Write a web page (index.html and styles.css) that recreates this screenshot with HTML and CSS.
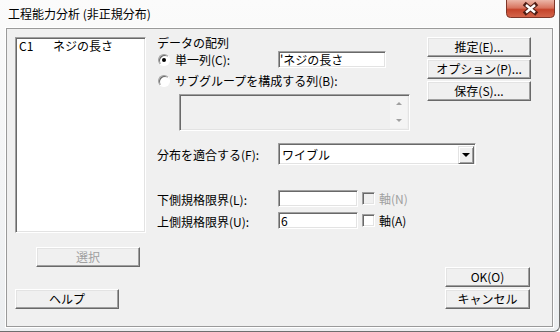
FILE: index.html
```html
<!DOCTYPE html>
<html lang="ja">

<head>
  <meta charset="UTF-8">
  <title>工程能力分析 (非正規分布)</title>
  <link rel="stylesheet" href="styles.css">
</head>

<body>
  <div class="window">
    <div class="titlebar">
      <span class="caption">工程能力分析 (非正規分布)</span>
      <span class="close">
        <svg width="49" height="18" viewBox="0 0 49 18">
          <defs>
            <linearGradient id="closeGrad" x1="0" y1="0" x2="0" y2="1">
              <stop offset="0" stop-color="#ecb6a8" />
              <stop offset="0.45" stop-color="#d8745f" />
              <stop offset="0.55" stop-color="#c5442b" />
              <stop offset="1" stop-color="#d4664c" />
            </linearGradient>
          </defs>
          <path d="M0.5 0 V13.5 Q0.5 17.5 4.5 17.5 H44.5 Q48.5 17.5 48.5 13.5 V0" fill="url(#closeGrad)" stroke="#7d3629" />
          <path d="M20 5 L29 12.5 M29 5 L20 12.5" stroke="#4f1d15" stroke-width="4.6" stroke-linecap="square" />
          <path d="M20 5 L29 12.5 M29 5 L20 12.5" stroke="#fff" stroke-width="2.4" />
        </svg>
      </span>
    </div>

    <div class="client">
      <div class="top">
        <!-- 列リスト -->
        <div class="left">
          <div class="listbox">
            <div class="item"><span class="colname">C1</span><span>ネジの長さ</span></div>
          </div>
          <button class="btn select" disabled>選択</button>
        </div>

        <!-- 入力欄 -->
        <div class="form">
          <div class="group-label">データの配列</div>
          <div class="radio-row">
            <div class="opt"><span class="radio checked"></span><span>単一列(C):</span></div>
            <div class="edit single">'ネジの長さ</div>
          </div>
          <div class="radio-row sub">
            <div class="opt"><span class="radio"></span><span>サブグループを構成する列(B):</span></div>
          </div>
          <div class="sublist">
            <div class="scroll">
              <span class="arrow up"></span>
              <span class="arrow down"></span>
            </div>
          </div>
          <div class="fit-row">
            <span class="lbl">分布を適合する(F):</span>
            <div class="combo">
              <span class="combo-text">ワイブル</span>
              <span class="drop"><span class="tri"></span></span>
            </div>
          </div>
          <div class="limit-row">
            <span class="lbl">下側規格限界(L):</span>
            <div class="edit limit"></div>
            <span class="check disabled"></span>
            <span class="check-text disabled">軸(N)</span>
          </div>
          <div class="limit-row">
            <span class="lbl">上側規格限界(U):</span>
            <div class="edit limit">6</div>
            <span class="check"></span>
            <span class="check-text">軸(A)</span>
          </div>
        </div>

        <!-- 右側ボタン -->
        <div class="side">
          <button class="btn">推定(E)...</button>
          <button class="btn">オプション(P)...</button>
          <button class="btn">保存(S)...</button>
        </div>
      </div>

      <div class="footer">
        <button class="btn help">ヘルプ</button>
        <div class="footer-right">
          <button class="btn ok">OK(O)</button>
          <button class="btn ok">キャンセル</button>
        </div>
      </div>
    </div>
  </div>
</body>

</html>
```

FILE: styles.css
```css
* {
  box-sizing: border-box;
}

body {
  margin: 0;
  font-family: "Noto Sans CJK JP", "Noto Sans", sans-serif;
  font-size: 12px;
  color: #000;
  background: #fff;
}

.window {
  width: 560px;
  height: 332px;
  background: linear-gradient(#fbfbfb, #eceef0);
  border-right: 1px solid #6e6e6e;
  border-bottom: 1px solid #6e6e6e;
  border-bottom-right-radius: 6px;
  overflow: hidden;
}

.titlebar {
  height: 28px;
  display: flex;
  justify-content: space-between;
  align-items: flex-start;
}

.caption {
  margin: 6px 0 0 8px;
  line-height: 16px;
}

.close {
  display: block;
  width: 49px;
  height: 18px;
  margin-right: 4px;
}

.close svg {
  display: block;
}

.client {
  margin-left: 6px;
  width: 547px;
  border: 1px solid #9a9a9a;
  box-shadow: 0 0 0 1px #fff;
  background: #f0f0f0;
  padding: 8px 21px 17px 8px;
}

.top {
  display: grid;
  grid-template-columns: 131px minmax(0, 1fr) 104px;
  column-gap: 11px;
  align-items: start;
}

.form {
  min-width: 0;
}

/* 3D sunken frame */
.listbox,
.edit,
.combo,
.sublist {
  border: 1px solid;
  border-color: #a0a0a0 #fff #fff #a0a0a0;
  box-shadow: inset 1px 1px #696969, inset -1px -1px #e3e3e3;
}

.listbox {
  height: 196px;
  background: #fff;
  padding: 1px 3px;
}

.item {
  display: flex;
  line-height: 14px;
}

.colname {
  width: 34px;
}

.btn {
  display: block;
  height: 20px;
  padding: 0;
  font: inherit;
  line-height: 16px;
  color: #000;
  background: #f0f0f0;
  border: 1px solid;
  border-color: #fff #696969 #696969 #fff;
  box-shadow: inset -1px -1px #a0a0a0, inset 1px 1px #e3e3e3;
  white-space: nowrap;
}

.btn:disabled {
  color: #a0a0a0;
}

.select {
  width: 104px;
  margin: 14px 0 0 21px;
}

.group-label {
  line-height: 14px;
  margin-top: -1px;
}

.radio-row {
  display: flex;
  align-items: center;
  height: 17px;
  margin-top: 1px;
}

.radio-row.sub {
  height: 14px;
  margin-top: 6px;
}

.opt {
  display: flex;
  align-items: center;
  gap: 5px;
  width: 121px;
  flex: none;
  white-space: nowrap;
  line-height: 14px;
}

.radio-row.sub .opt {
  width: auto;
}

.radio {
  position: relative;
  flex: none;
  width: 12px;
  height: 12px;
  margin-left: 1px;
  border-radius: 50%;
  background: #fff;
  border: 1px solid;
  border-color: #a0a0a0 #fff #fff #a0a0a0;
  box-shadow: inset 1px 1px #696969;
}

.radio.checked::after {
  content: "";
  position: absolute;
  left: 3px;
  top: 3px;
  width: 4px;
  height: 4px;
  border-radius: 50%;
  background: #000;
}

.edit {
  height: 17px;
  background: #fff;
  padding: 0 2px;
  line-height: 15px;
  white-space: nowrap;
}

.single {
  width: 108px;
  flex: none;
  padding-left: 1px;
}

.sublist {
  display: flex;
  justify-content: flex-end;
  width: 231px;
  height: 37px;
  margin: 6px 0 0 22px;
  background: #f0f0f0;
  padding: 2px;
}

.scroll {
  display: flex;
  flex-direction: column;
  justify-content: space-between;
  align-items: center;
  width: 17px;
  padding: 5px 0 6px;
  background: #f4f4f4;
}

.arrow {
  width: 0;
  height: 0;
  border-left: 3px solid transparent;
  border-right: 3px solid transparent;
}

.arrow.up {
  border-bottom: 3px solid #a0a0a0;
}

.arrow.down {
  border-top: 3px solid #a0a0a0;
}

.fit-row {
  display: flex;
  align-items: center;
  height: 22px;
  margin-top: 12px;
  white-space: nowrap;
}

.lbl {
  width: 121px;
  flex: none;
  line-height: 14px;
  padding-top: 2px;
}

.combo {
  display: flex;
  justify-content: space-between;
  flex: none;
  width: 198px;
  height: 22px;
  background: #fff;
  padding: 2px 1px 2px 3px;
}

.combo-text {
  line-height: 17px;
}

.drop {
  display: flex;
  align-items: center;
  justify-content: center;
  width: 16px;
  height: 18px;
  background: #f0f0f0;
  border: 1px solid;
  border-color: #e3e3e3 #696969 #696969 #e3e3e3;
  box-shadow: inset 1px 1px #fff, inset -1px -1px #a0a0a0;
}

.tri {
  width: 0;
  height: 0;
  border-left: 4px solid transparent;
  border-right: 4px solid transparent;
  border-top: 4px solid #000;
}

.limit-row {
  display: flex;
  align-items: center;
  height: 17px;
  margin-top: 25px;
  white-space: nowrap;
}

.limit-row + .limit-row {
  margin-top: 5px;
}

.limit {
  width: 80px;
  flex: none;
}

.check {
  flex: none;
  width: 13px;
  height: 13px;
  margin-left: 4px;
  background: #fff;
  border: 1px solid;
  border-color: #a0a0a0 #fff #fff #a0a0a0;
  box-shadow: inset 1px 1px #696969, inset -1px -1px #e3e3e3;
}

.check.disabled {
  background: #f0f0f0;
}

.check-text {
  margin-left: 4px;
  line-height: 14px;
}

.check-text.disabled {
  color: #a0a0a0;
}

.side {
  display: flex;
  flex-direction: column;
  gap: 2px;
}

.footer {
  display: flex;
  justify-content: space-between;
  align-items: flex-end;
}

.help {
  width: 104px;
}

.footer-right {
  display: flex;
  flex-direction: column;
  gap: 2px;
  margin-right: 1px;
}

.ok {
  width: 85px;
}
```
